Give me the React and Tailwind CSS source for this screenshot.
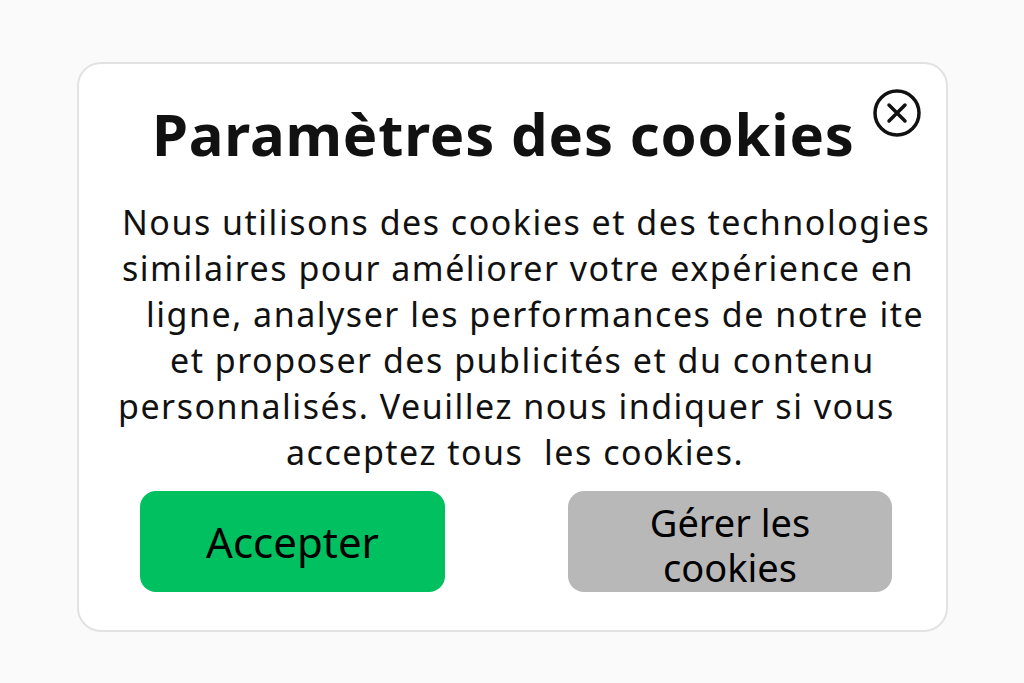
import React from 'react'

const LINES = [
  { text: 'Nous utilisons des cookies et des technologies', pad: 'pl-[43px]' },
  { text: 'similaires pour améliorer votre expérience en', pad: 'pl-[43px]' },
  { text: 'ligne, analyser les performances de notre ite', pad: 'pl-[67px]' },
  { text: 'et proposer des publicités et du contenu', pad: 'pl-[91px]' },
  { text: 'personnalisés. Veuillez nous indiquer si vous', pad: 'pl-[39px]' },
  { text: 'acceptez tous\u00a0 les cookies.', pad: 'pl-[207px]' }
]

function CloseIcon() {
  return (
    <svg width="50" height="50" viewBox="0 0 50 50" fill="none" stroke="#111" strokeWidth="3.5" strokeLinecap="round">
      <circle cx="25" cy="25" r="22" />
      <path d="M17 17 L33 33 M33 17 L17 33" />
    </svg>
  )
}

export default function App() {
  return (
    <div className="min-h-screen w-full bg-[#fafafa] pt-[62px] pl-[77px]" style={{ fontFamily: '"Noto Sans", "Open Sans", sans-serif' }}>
      <div className="relative w-[871px] h-[570px] bg-white border-2 border-[#e2e2e2] rounded-[24px] text-[#111]">
        <button className="absolute top-[24px] right-[24px]" aria-label="Fermer">
          <CloseIcon />
        </button>

        <h1 className="pt-[38px] pl-[73px] text-[58px] leading-[64px] font-bold whitespace-nowrap tracking-[0.8px]">
          Paramètres des cookies
        </h1>

        <div className="mt-[33px] text-[34px] leading-[46px] tracking-[1.5px]">
          {LINES.map(l => (
            <div key={l.text} className={`${l.pad} whitespace-nowrap`}>{l.text}</div>
          ))}
        </div>

        <div className="mt-[16px] pl-[61px] flex gap-[123px]">
          <button className="w-[305px] h-[101px] rounded-[16px] bg-[#00c060] text-[42px] leading-none text-black">
            Accepter
          </button>
          <button className="w-[324px] h-[101px] rounded-[16px] bg-[#b8b8b8] pt-[6px] text-[38px] leading-[45px] text-black">
            Gérer les<br />cookies
          </button>
        </div>
      </div>
    </div>
  )
}
